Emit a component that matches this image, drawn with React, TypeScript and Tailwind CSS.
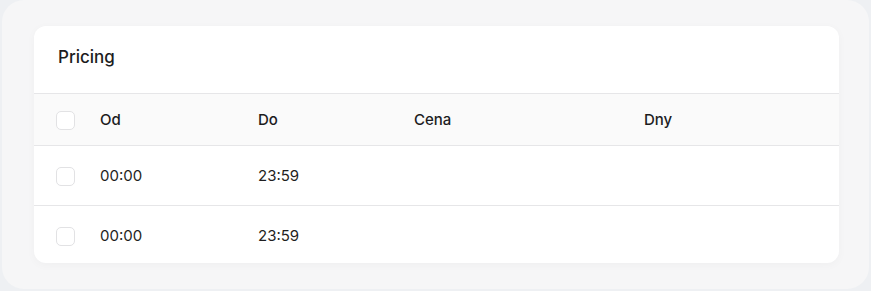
import React from "react";

const rows = [
  { from: "00:00", to: "23:59", price: "", days: "" },
  { from: "00:00", to: "23:59", price: "", days: "" },
];

function Checkbox() {
  return (
    <span className="block w-[19px] h-[19px] rounded-[5px] border border-[#e2e2e4] bg-white" />
  );
}

const cols = "grid grid-cols-[66px_158px_156px_230px_1fr] items-center";

export default function App() {
  return (
    <div
      className="w-[871px] h-[291px] bg-[#eef0f3] px-[2px] pb-[2px]"
      style={{ fontFamily: "Inter, 'Noto Sans', sans-serif" }}
    >
      <div className="h-full rounded-[22px] bg-[#f6f6f7] pt-[26px] pl-[32px] pr-[30px] pb-[26px]">
        <div className="h-full rounded-[12px] bg-white shadow-[0_2px_10px_rgba(0,0,0,0.03)] overflow-hidden">
          {/* card title */}
          <div className="h-[68px] flex items-center px-[24px] pb-[4px] border-b border-[#e6e6e8]">
            <h2 className="text-[17px] font-medium text-[#1c1c1e]">Pricing</h2>
          </div>

          {/* column heads */}
          <div className={`${cols} h-[52px] pt-[2px] bg-[#fafafa] border-b border-[#e6e6e8] text-[15px] font-medium text-[#1c1c1e]`}>
            <div className="pl-[22px]">
              <Checkbox />
            </div>
            <div>Od</div>
            <div>Do</div>
            <div>Cena</div>
            <div>Dny</div>
          </div>

          {rows.map((r, i) => (
            <div
              key={i}
              className={`${cols} h-[60px] pt-[1px] text-[15px] text-[#1f1f21] ${
                i < rows.length - 1 ? "border-b border-[#e6e6e8]" : ""
              }`}
            >
              <div className="pl-[22px]">
                <Checkbox />
              </div>
              <div>{r.from}</div>
              <div>{r.to}</div>
              <div>{r.price}</div>
              <div>{r.days}</div>
            </div>
          ))}
        </div>
      </div>
    </div>
  );
}
